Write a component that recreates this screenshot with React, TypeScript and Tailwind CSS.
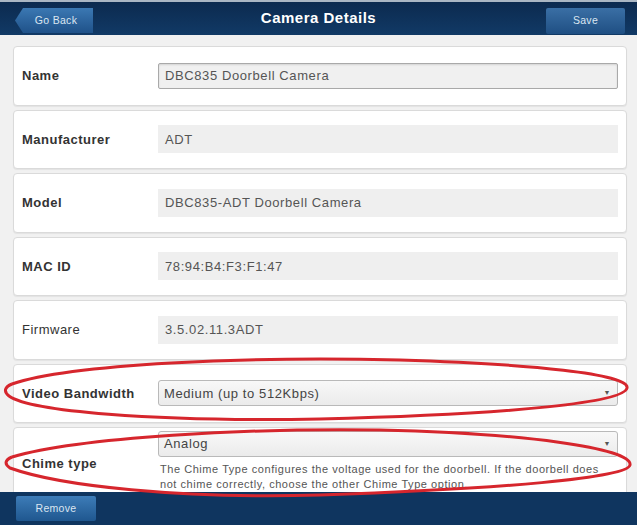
import React from "react";

const Label = ({ children, bold = true }: { children: React.ReactNode; bold?: boolean }) => (
  <div className={`w-[136px] shrink-0 text-[13px] tracking-[0.5px] text-[#333] ${bold ? "font-bold" : "font-normal"}`}>{children}</div>
);

const ReadOnly = ({ value }: { value: string }) => (
  <div className="flex-1 h-[28px] bg-[#efefef] flex items-center pl-[7px] text-[13px] tracking-[0.6px] text-[#555]">{value}</div>
);

const Card = ({ children, className = "" }: { children: React.ReactNode; className?: string }) => (
  <div className={`shrink-0 bg-white border border-[#dadada] rounded-[4px] shadow-[0_1px_1px_rgba(0,0,0,0.06)] flex pl-[8px] pr-[8px] ${className}`}>
    {children}
  </div>
);

export default function App() {
  return (
    <div className="relative w-[637px] h-[525px] overflow-hidden bg-[#f1f1f1] flex flex-col font-['Liberation_Sans',Arial,sans-serif]">
      {/* Header */}
      <div className="shrink-0 h-[35px] border-t-[2px] border-[#aab6c3] bg-gradient-to-b from-[#0c2a4f] to-[#113a66] flex items-center relative">
        <div className="absolute left-[15px] top-[6px] h-[25px] w-[78px] [clip-path:polygon(8px_0,100%_0,100%_100%,8px_100%,0_50%)] bg-gradient-to-b from-[#3b78b3] to-[#1f5289] flex items-center justify-center pl-[4px] text-[10.5px] tracking-[0.3px] text-[#dbe6f1]">
          Go Back
        </div>
        <div className="flex-1 text-center text-white font-bold text-[15px] tracking-[0.5px]">Camera Details</div>
        <div className="absolute left-[546px] top-[6px] h-[26px] w-[79px] rounded-[2px] bg-gradient-to-b from-[#3a6fa5] to-[#1f4f83] flex items-center justify-center text-[10.5px] tracking-[0.3px] text-[#dbe6f1]">
          Save
        </div>
      </div>

      {/* Content */}
      <div className="flex-1 overflow-hidden flex flex-col gap-[4px] pt-[11px] pl-[13px] pr-[10px]">
        <Card className="h-[59.5px] items-center">
          <Label>Name</Label>
          <div className="flex-1 h-[26px] bg-[#f0f0f0] border border-[#a9a9a9] rounded-[2px] shadow-[inset_0_1px_2px_rgba(0,0,0,0.12)] flex items-center pl-[6px] text-[13px] tracking-[0.6px] text-[#555]">
            DBC835 Doorbell Camera
          </div>
        </Card>
        <Card className="h-[59.5px] items-center">
          <Label>Manufacturer</Label>
          <ReadOnly value="ADT" />
        </Card>
        <Card className="h-[59.5px] items-center">
          <Label>Model</Label>
          <ReadOnly value="DBC835-ADT Doorbell Camera" />
        </Card>
        <Card className="h-[59.5px] items-center">
          <Label>MAC ID</Label>
          <ReadOnly value="78:94:B4:F3:F1:47" />
        </Card>
        <Card className="h-[59.5px] items-center">
          <Label bold={false}>Firmware</Label>
          <ReadOnly value="3.5.02.11.3ADT" />
        </Card>
        <Card className="h-[59.5px] items-center">
          <Label>Video Bandwidth</Label>
          <div className="flex-1 h-[26px] bg-gradient-to-b from-[#f8f8f8] to-[#ebebeb] border border-[#b9b9b9] rounded-[3px] flex items-center justify-between pl-[5px] pr-[6px] text-[13px] tracking-[0.6px] text-[#444]">
            <span>Medium (up to 512Kbps)</span>
            <span className="text-[7px] text-[#555]">▼</span>
          </div>
        </Card>
        <Card className="h-[76px] items-start pt-[3px]">
          <div className="w-[136px] shrink-0 h-[66px] flex items-center text-[13px] tracking-[0.5px] font-bold text-[#333]">Chime type</div>
          <div className="flex-1 flex flex-col">
            <div className="h-[26px] bg-gradient-to-b from-[#f8f8f8] to-[#ebebeb] border border-[#b9b9b9] rounded-[3px] flex items-center justify-between pl-[5px] pr-[6px] text-[13px] tracking-[0.6px] text-[#444]">
              <span>Analog</span>
              <span className="text-[7px] text-[#555]">▼</span>
            </div>
            <div className="mt-[5px] pl-[2px] text-[11px] tracking-[0.55px] leading-[15px] text-[#555]">
              The Chime Type configures the voltage used for the doorbell. If the doorbell does not chime correctly, choose the other Chime Type option.
            </div>
          </div>
        </Card>
      </div>

      {/* Footer */}
      <div className="shrink-0 h-[33px] bg-[#0f355f] flex items-center pl-[16px]">
        <div className="h-[25px] w-[80px] rounded-[2px] bg-gradient-to-b from-[#3d7cb8] to-[#1f578f] flex items-center justify-center text-[10.5px] tracking-[0.3px] text-[#dbe6f1]">
          Remove
        </div>
      </div>

      {/* Red annotation ovals */}
      <svg className="absolute inset-0 pointer-events-none" width="637" height="525" viewBox="0 0 637 525">
        <path
          d="M 12 384 C 70 364, 250 356, 400 360 C 530 364, 630 374, 627 388 C 624 402, 520 414, 320 419 C 150 422, 30 411, 9 396 C 3 391, 5 387, 12 384"
          fill="none"
          stroke="#d6262d"
          strokeWidth="3"
        />
        <path
          d="M 12 457 C 80 437, 250 428, 380 430 C 520 433, 633 448, 630 465 C 628 478, 500 489, 320 495 C 180 499, 60 486, 10 468 C 4 464, 5 460, 12 457"
          fill="none"
          stroke="#d6262d"
          strokeWidth="3"
        />
      </svg>
    </div>
  );
}
